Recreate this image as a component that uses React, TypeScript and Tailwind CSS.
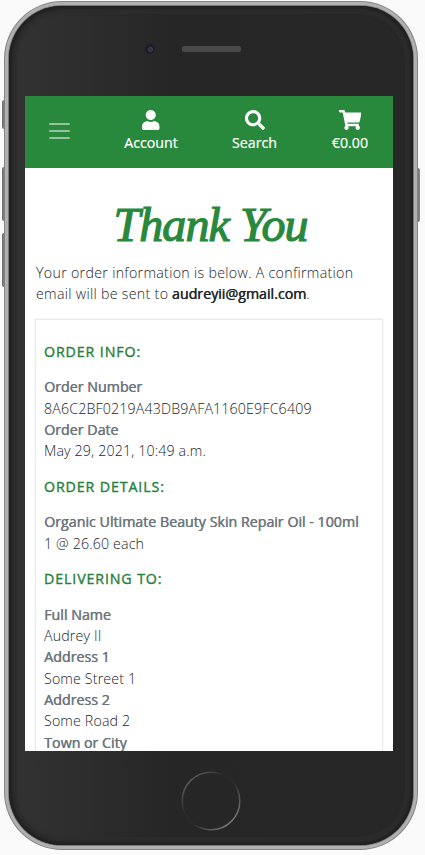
import type { ReactNode } from 'react';
import { FaSearch, FaShoppingCart, FaUser } from 'react-icons/fa';

function SideButton({ className }: { className: string }) {
  return <div className={`absolute w-[3px] bg-linear-to-r from-[#6a6a6a] to-[#8c8c8c] ${className}`} />;
}

function NavItem({ icon, label, className }: { icon: ReactNode; label: string; className: string }) {
  return (
    <a className={`flex flex-col items-center text-[14.22px] leading-[21.33px] text-white [-webkit-text-stroke:0.2px_white] ${className}`}>
      <span className="mb-[2px] flex h-[21px] items-center text-[20px]">{icon}</span>
      <span className="whitespace-nowrap">{label}</span>
    </a>
  );
}

function Header() {
  return (
    <header className="flex h-[72px] shrink-0 items-start bg-[#28883c] pt-[13px]">
      <button className="mt-[14px] ml-[24px] flex w-[21px] flex-col gap-[5px]" aria-label="Menu">
        <span className="h-[2px] rounded-full bg-[#94c39d]" />
        <span className="h-[2px] rounded-full bg-[#94c39d]" />
        <span className="h-[2px] rounded-full bg-[#94c39d]" />
      </button>
      <NavItem icon={<FaUser className="h-5 w-[17.5px]" />} label="Account" className="ml-[53px] w-[56px]" />
      <NavItem icon={<FaSearch className="size-5" />} label="Search" className="ml-[52px] w-[47px]" />
      <NavItem icon={<FaShoppingCart className="h-5 w-[22.5px]" />} label="€0.00" className="ml-[53px] w-[38px]" />
    </header>
  );
}

function Section({ title, children }: { title: string; children: ReactNode }) {
  return (
    <section>
      <h2 className="mb-[14.22px] font-normal tracking-[0.88px] text-[#28803e] uppercase [-webkit-text-stroke:0.4px_#28803e]">{title}</h2>
      <div className="mb-[14.22px]">{children}</div>
    </section>
  );
}

function Field({ label, value }: { label: string; value?: string }) {
  return (
    <>
      <div className="font-normal tracking-[0px] whitespace-nowrap text-[#6c757d] [text-shadow:0.5px_0_0_#6c757d]">{label}</div>
      {value && <div className="tracking-[0.14px]">{value}</div>}
    </>
  );
}

export default function App() {
  return (
    <div className="relative h-[855px] w-[425px] overflow-hidden bg-[#fafafa] pt-[1px] pl-[4px] font-['Open_Sans','Noto_Sans',sans-serif]">
      <SideButton className="top-[100px] left-[2px] h-[29px] rounded-l-[2px]" />
      <SideButton className="top-[167px] left-[2px] h-[54px] rounded-l-[2px]" />
      <SideButton className="top-[233px] left-[2px] h-[54px] rounded-l-[2px]" />
      <SideButton className="top-[168px] left-[417px] h-[54px] rounded-r-[2px]" />
      <div className="relative h-[848.5px] w-[413.5px] rounded-[58px] bg-[#858585] p-[1px]">
        <div className="h-full rounded-[57px] bg-[#b0b0ae] p-[3px]">
          <div className="h-full rounded-[54px] bg-[#777] p-[1px]">
            <div className="h-full overflow-hidden rounded-[53px] bg-linear-to-r from-[#333] via-[#262626] via-40% to-[#272727] shadow-[inset_0_0_3px_3px_#202020,inset_0_0_2px_8px_#2d2d2d]">
              <div className="flex h-[90px] items-start pt-[38px] pl-[136px]">
                <div className="flex size-[10px] items-center justify-center rounded-full bg-[#1e1d29]">
                  <span className="size-[5px] rounded-full border border-[#474654] bg-[#30303c]" />
                </div>
                <div className="mt-[2px] ml-[27px] h-[6px] w-[59px] rounded-[2px] bg-[#494949] bg-[radial-gradient(#353535_35%,transparent_40%)] bg-size-[2px_2px]" />
              </div>
              <div className="ml-[16px] flex h-[655px] w-[368px] flex-col overflow-hidden bg-white">
                <Header />
                <main className="px-[11px] pt-[29px] text-[14.22px] leading-[21.33px] font-light tracking-[0.3px] text-[#212529]">
                  <h1 className="mb-[5px] h-[60px] pl-[3px] text-center font-['Z003','URW_Chancery_L','Liberation_Serif',cursive] text-[48px] leading-[56px] font-normal tracking-[-0.9px] whitespace-nowrap text-[#28883c] italic [-webkit-text-stroke:1.2px_#28883c]">
                    Thank You
                  </h1>
                  <p className="h-[56.5px] whitespace-nowrap">
                    Your order information is below. A confirmation
                    <br />
                    email will be sent to{' '}
                    <strong className="-ml-[0.5px] font-normal tracking-[0px] [text-shadow:0.5px_0_0_#212529]">audreyii@gmail.com</strong>.
                  </p>
                  <div className="-mx-px w-[348px] border-[1.5px] border-[#e9ecef] px-[8px] pt-[21.2px] shadow-[0_0_0_0.5px_#f1f3f5]">
                    <Section title="Order Info:">
                      <Field label="Order Number" value="8A6C2BF0219A43DB9AFA1160E9FC6409" />
                      <Field label="Order Date" value="May 29, 2021, 10:49 a.m." />
                    </Section>
                    <Section title="Order Details:">
                      <Field label="Organic Ultimate Beauty Skin Repair Oil - 100ml" value="1 @ 26.60 each" />
                    </Section>
                    <Section title="Delivering To:">
                      <Field label="Full Name" value="Audrey II" />
                      <Field label="Address 1" value="Some Street 1" />
                      <Field label="Address 2" value="Some Road 2" />
                      <Field label="Town or City" />
                    </Section>
                  </div>
                </main>
              </div>
              <div className="flex justify-center pt-[19px]">
                <svg className="h-[62px] w-[62px]" viewBox="0 0 62 62" fill="none" strokeWidth="1.5">
                  <defs>
                    <linearGradient id="ring" x1="0" y1="0" x2="1" y2="1">
                      <stop offset="0.1" stopColor="#606060" />
                      <stop offset="0.38" stopColor="#292929" />
                      <stop offset="0.55" stopColor="#292929" />
                      <stop offset="0.85" stopColor="#757575" />
                    </linearGradient>
                  </defs>
                  <circle cx="31" cy="31" r="28.8" stroke="url(#ring)" />
                </svg>
              </div>
            </div>
          </div>
        </div>
      </div>
    </div>
  );
}
